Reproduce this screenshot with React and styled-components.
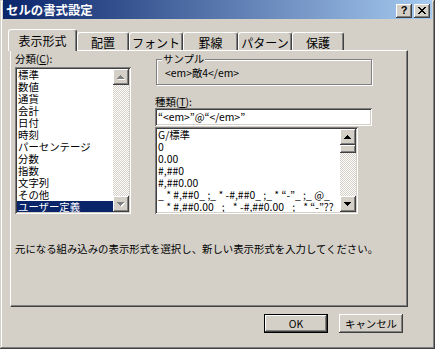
import React from 'react';
import styled, { createGlobalStyle, css } from 'styled-components';

const FACE = '#d4d0c8';
const NAVY = '#0a246a';
const FONT = `"Noto Sans CJK JP", "Noto Sans", sans-serif`;

const Global = createGlobalStyle`
  html, body { margin: 0; padding: 0; background: ${FACE}; }
  body { font-family: ${FONT}; }
  * { box-sizing: border-box; }
`;

const raised = css`
  background: ${FACE};
  box-shadow: inset -1px -1px #404040, inset 1px 1px #fff, inset -2px -2px #808080, inset 2px 2px ${FACE};
`;

const sunken = css`
  background: #fff;
  box-shadow: inset 1px 1px #808080, inset -1px -1px #fff, inset 2px 2px #404040, inset -2px -2px ${FACE};
  padding: 2px;
`;

const Window = styled.div`
  width: 435px;
  height: 349px;
  background: ${FACE};
  padding: 0 3px 3px 3px;
  box-shadow: inset -1px -1px #404040, inset 1px 1px ${FACE}, inset -2px -2px #808080, inset 2px 2px #fff;
  display: flex;
  flex-direction: column;
  overflow: hidden;
  font-size: 10.4px;
  color: #000;
`;

const TitleBar = styled.div`
  height: 19px;
  display: flex;
  align-items: flex-start;
  background: linear-gradient(to right, ${NAVY}, #a6caf0);
  padding: 0 2px 0 3px;
`;

const TitleText = styled.div`
  flex: 1;
  color: #fff;
  font-weight: bold;
  font-size: 12.4px;
  line-height: 14px;
  padding-top: 3px;
  white-space: nowrap;
`;

const TitleButton = styled.div`
  ${raised};
  width: 16px;
  height: 14px;
  margin-top: 4px;
  margin-left: 2px;
  display: flex;
  align-items: center;
  justify-content: center;
  font-family: "Liberation Sans", sans-serif;
  font-weight: bold;
  font-size: 11px;
  line-height: 1;
  padding-bottom: 1px;
`;

const Body = styled.div`
  padding: 10px 24px 0 7px;
  display: flex;
  flex-direction: column;
`;

const TabRow = styled.div`
  display: flex;
  align-items: flex-end;
  height: 21px;
  margin-left: -2px;
  position: relative;
  z-index: 1;
`;

const Tab = styled.div`
  width: ${(p) => p.$w}px;
  height: ${(p) => (p.$active ? 22 : 18)}px;
  margin-bottom: ${(p) => (p.$active ? -1 : 0)}px;
  background: ${FACE};
  border-top: 1px solid #fff;
  border-left: 1px solid #fff;
  border-right: 1px solid #404040;
  box-shadow: inset -1px 0 #808080;
  border-radius: 3px 3px 0 0;
  font-size: 12px;
  line-height: 14px;
  display: flex;
  justify-content: center;
  padding-top: ${(p) => (p.$active ? 4 : 3)}px;
  white-space: nowrap;
`;

const Panel = styled.div`
  height: 257px;
  background: ${FACE};
  border-top: 1px solid #fff;
  border-left: 1px solid #fff;
  border-right: 1px solid #404040;
  border-bottom: 1px solid #404040;
  box-shadow: inset -1px -1px #808080;
  padding: 2px 0 0 4px;
  display: flex;
  flex-direction: column;
`;

const TopArea = styled.div`
  display: flex;
  align-items: flex-start;
`;

const LeftCol = styled.div`
  width: 116px;
  display: flex;
  flex-direction: column;
`;

const RightCol = styled.div`
  width: 217px;
  margin-left: 24px;
  display: flex;
  flex-direction: column;
`;

const Label = styled.div`
  height: 12px;
  line-height: 12px;
  margin-top: ${(p) => p.$mt || 0}px;
  white-space: nowrap;
  u { text-decoration: underline; text-underline-offset: 1px; }
`;

const ListBox = styled.div`
  ${sunken};
  width: ${(p) => p.$w}px;
  height: ${(p) => p.$h}px;
  margin-top: ${(p) => p.$mt}px;
  display: flex;
  overflow: hidden;
`;

const Items = styled.div`
  flex: 1;
  min-width: 0;
  overflow: hidden;
`;

const Item = styled.div`
  height: 12px;
  line-height: 12px;
  padding-left: 1px;
  white-space: pre;
  background: ${(p) => (p.$sel ? NAVY : 'transparent')};
  color: ${(p) => (p.$sel ? '#fff' : '#000')};
`;

const ScrollBar = styled.div`
  width: 16px;
  display: flex;
  flex-direction: column;
`;

const ArrowButton = styled.div`
  ${raised};
  width: 16px;
  height: 16px;
  display: flex;
  align-items: center;
  justify-content: center;
`;

const Thumb = styled.div`
  ${raised};
  width: 16px;
  height: 8px;
`;

const Track = styled.div`
  flex: 1;
  background-color: #fff;
  background-image: conic-gradient(${FACE} 25%, transparent 0 50%, ${FACE} 0 75%, transparent 0);
  background-size: 2px 2px;
`;

const GroupBox = styled.div`
  position: relative;
  margin-top: 6px;
  margin-left: 1px;
  width: 216px;
  height: 26px;
  border: 1px solid #808080;
  box-shadow: inset 1px 1px #fff, 1px 1px 0 #fff;
  padding: 7px 0 0 8px;
  line-height: 12px;
  white-space: nowrap;
`;

const Legend = styled.div`
  position: absolute;
  top: -7px;
  left: 5px;
  padding: 0 1px;
  background: ${FACE};
  line-height: 12px;
`;

const TextInput = styled.div`
  ${sunken};
  height: 18px;
  width: 217px;
  padding-left: 3px;
  line-height: 14px;
  white-space: pre;
`;

const Description = styled.div`
  margin-top: 28px;
  line-height: 14px;
  white-space: nowrap;
`;

const ButtonRow = styled.div`
  margin-top: 7px;
  display: flex;
  justify-content: flex-end;
  gap: 11px;
  padding-right: 5px;
`;

const Button = styled.div`
  ${raised};
  width: 64px;
  height: 19px;
  display: flex;
  align-items: center;
  justify-content: center;
  line-height: 14px;
  ${(p) =>
    p.$default &&
    css`
      border: 1px solid #000;
      box-shadow: inset -1px -1px #404040, inset 1px 1px #fff, inset -2px -2px #808080;
    `}
`;

function Arrow({ down, disabled }) {
  const pts = down ? '0,0 7,0 3.5,4' : '3.5,0 7,4 0,4';
  return (
    <svg width="8" height="5" viewBox="0 0 8 5" shapeRendering="crispEdges">
      {disabled && <polygon points={pts} fill="#fff" transform="translate(1,1)" />}
      <polygon points={pts} fill={disabled ? '#808080' : '#000'} />
    </svg>
  );
}

function Scroll({ disabled, thumb }) {
  return (
    <ScrollBar>
      <ArrowButton>
        <Arrow disabled={disabled} />
      </ArrowButton>
      {thumb && <Thumb />}
      <Track />
      <ArrowButton>
        <Arrow down disabled={disabled} />
      </ArrowButton>
    </ScrollBar>
  );
}

const tabs = [
  { label: '表示形式', w: 69, active: true },
  { label: '配置', w: 52 },
  { label: 'フォント', w: 54 },
  { label: '罫線', w: 55 },
  { label: 'パターン', w: 54 },
  { label: '保護', w: 52 },
];

const categories = [
  '標準', '数値', '通貨', '会計', '日付', '時刻', 'パーセンテージ',
  '分数', '指数', '文字列', 'その他', 'ユーザー定義',
];

const formats = [
  'G/標準',
  '0',
  '0.00',
  '#,##0',
  '#,##0.00',
  '_ * #,##0_ ;_ * -#,##0_ ;_ * “-”_ ;_ @_ ',
  '_ * #,##0.00_ ;_ * -#,##0.00_ ;_ * “-”??_ ;_ @_ ',
];

export default function App() {
  return (
    <>
      <Global />
      <Window>
        <TitleBar>
          <TitleText>セルの書式設定</TitleText>
          <TitleButton>?</TitleButton>
          <TitleButton>
            <svg width="8" height="7" viewBox="0 0 8 7" shapeRendering="crispEdges">
              <path d="M0.5 0 L7.5 7 M7.5 0 L0.5 7" stroke="#000" strokeWidth="1.6" />
            </svg>
          </TitleButton>
        </TitleBar>
        <Body>
          <TabRow>
            {tabs.map((t) => (
              <Tab key={t.label} $w={t.w} $active={t.active}>
                {t.label}
              </Tab>
            ))}
          </TabRow>
          <Panel>
            <TopArea>
              <LeftCol>
                <Label>
                  分類(<u>C</u>):
                </Label>
                <ListBox $w={116} $h={147} $mt={2}>
                  <Items>
                    {categories.map((c, i) => (
                      <Item key={c} $sel={i === categories.length - 1}>
                        {c}
                      </Item>
                    ))}
                  </Items>
                  <Scroll disabled />
                </ListBox>
              </LeftCol>
              <RightCol>
                <GroupBox>
                  <Legend>サンプル</Legend>
                  {'<em>敵4</em>'}
                </GroupBox>
                <Label $mt={11}>
                  種類(<u>T</u>):
                </Label>
                <TextInput>{'“<em>”@“</em>”'}</TextInput>
                <ListBox $w={203} $h={87} $mt={1}>
                  <Items>
                    {formats.map((f) => (
                      <Item key={f}>{f}</Item>
                    ))}
                  </Items>
                  <Scroll thumb />
                </ListBox>
              </RightCol>
            </TopArea>
            <Description>
              元になる組み込みの表示形式を選択し、新しい表示形式を入力してください。
            </Description>
          </Panel>
          <ButtonRow>
            <Button $default>OK</Button>
            <Button>キャンセル</Button>
          </ButtonRow>
        </Body>
      </Window>
    </>
  );
}
